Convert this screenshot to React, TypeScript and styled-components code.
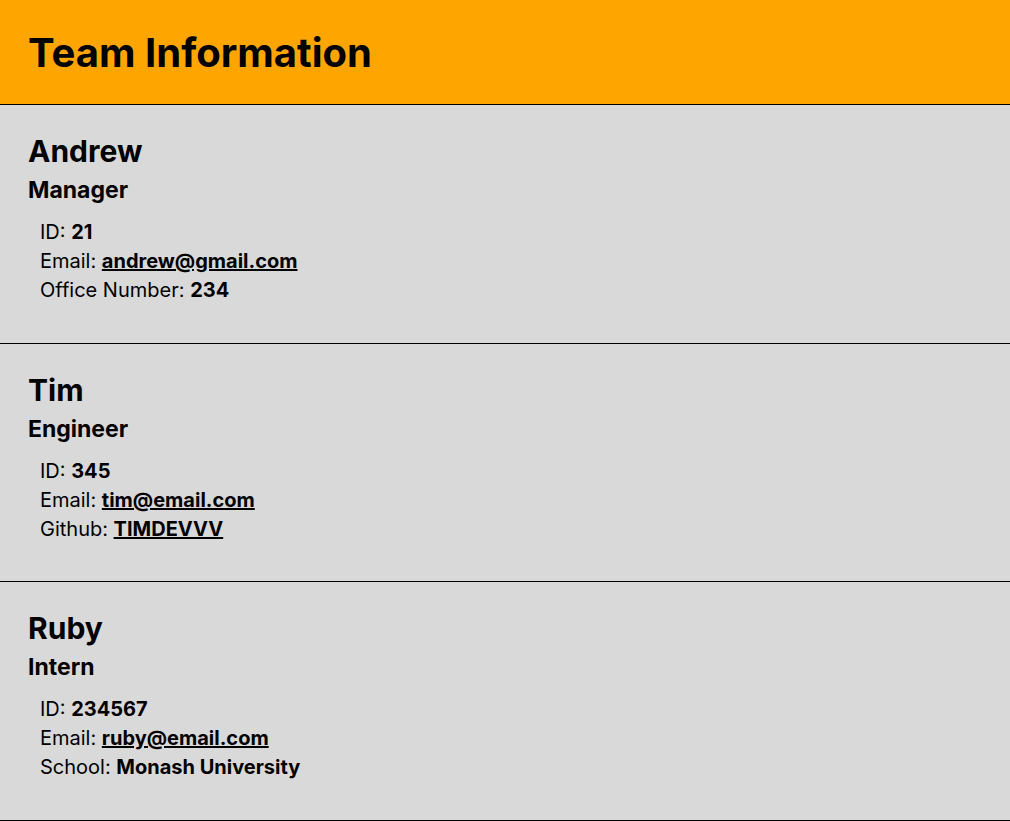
import * as React from "react";
import styled, { createGlobalStyle } from "styled-components";

const GlobalStyle = createGlobalStyle`
  body {
    margin: 0;
    font-family: Inter, "Noto Sans", sans-serif;
    color: #000;
    background-color: #fff;
  }
`;

const Header = styled.header`
  height: 104.4px;
  display: flex;
  align-items: center;
  padding: 0 28px;
  background-color: #ffa500;
  border-bottom: 1px solid #000;
`;

const Title = styled.h1`
  margin: 0;
  font-size: 40px;
  font-weight: 700;
`;

const Card = styled.section`
  height: 238.4px;
  box-sizing: border-box;
  padding: 28px 28px;
  background-color: #d9d9d9;
  border-bottom: 1px solid #000;
`;

const Name = styled.h2`
  margin: 0;
  font-size: 30px;
  font-weight: 700;
`;

const Role = styled.h3`
  margin: 7px 0 0;
  font-size: 23px;
  font-weight: 700;
`;

const Details = styled.ul`
  list-style: none;
  margin: 14px 0 0;
  padding: 0 0 0 12px;
`;

const Detail = styled.li`
  font-size: 20px;
  line-height: 29px;
`;

const Value = styled.span`
  font-weight: 700;
`;

const Link = styled.a`
  font-weight: 700;
  color: #000;
  text-decoration: underline;
`;

type Member = {
  name: string;
  role: string;
  id: string;
  email: string;
  extraLabel: string;
  extraValue: string;
  extraIsLink?: boolean;
};

const team: Member[] = [
  { name: "Andrew", role: "Manager", id: "21", email: "andrew@gmail.com", extraLabel: "Office Number", extraValue: "234" },
  { name: "Tim", role: "Engineer", id: "345", email: "tim@email.com", extraLabel: "Github", extraValue: "TIMDEVVV", extraIsLink: true },
  { name: "Ruby", role: "Intern", id: "234567", email: "ruby@email.com", extraLabel: "School", extraValue: "Monash University" },
];

function MemberCard({ member }: { member: Member }) {
  return (
    <Card>
      <Name>{member.name}</Name>
      <Role>{member.role}</Role>
      <Details>
        <Detail>
          ID: <Value>{member.id}</Value>
        </Detail>
        <Detail>
          Email: <Link href={`mailto:${member.email}`}>{member.email}</Link>
        </Detail>
        <Detail>
          {member.extraLabel}:{" "}
          {member.extraIsLink ? (
            <Link href="#">{member.extraValue}</Link>
          ) : (
            <Value>{member.extraValue}</Value>
          )}
        </Detail>
      </Details>
    </Card>
  );
}

export default function App() {
  return (
    <>
      <GlobalStyle />
      <Header>
        <Title>Team Information</Title>
      </Header>
      {team.map((m) => (
        <MemberCard key={m.name} member={m} />
      ))}
    </>
  );
}
